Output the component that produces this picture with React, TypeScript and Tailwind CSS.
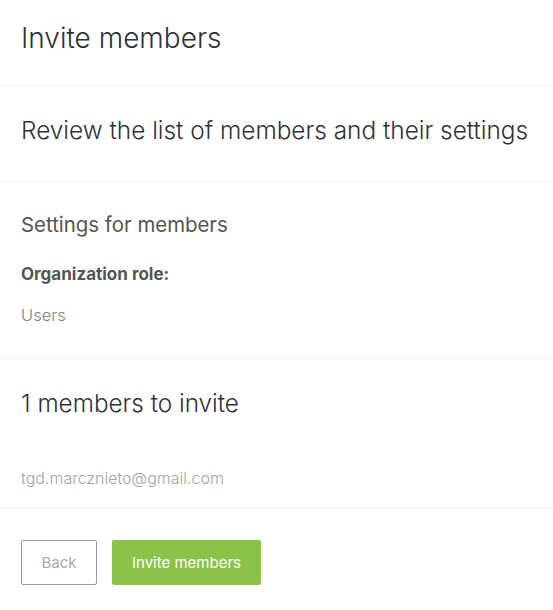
import React from 'react';

const members = ['tgd.marcznieto@gmail.com'];

const App: React.FC = () => {
  return (
    <div className="w-[553px] min-h-[610px] bg-white font-['Inter','Liberation_Sans',sans-serif]">
      {/* header */}
      <div className="px-[21px] pt-[21px] pb-[30px] border-b border-[#f1f1f1]">
        <h1 className="text-[28px] leading-[34px] font-light text-[#2f3337]">Invite members</h1>
      </div>

      <div className="px-[21px] pt-[29px] pb-[36px] border-b border-[#f1f1f1]">
        <h2 className="text-[24.4px] leading-[30px] font-light text-[#2f3337]">
          Review the list of members and their settings
        </h2>
      </div>

      {/* settings */}
      <div className="px-[21px] pt-[30px] pb-[32px] border-b border-[#f1f1f1]">
        <h3 className="text-[20.4px] leading-[26px] font-normal text-[#555]">Settings for members</h3>
        <p className="mt-[26px] text-[17px] leading-[20px] font-bold text-[#555]">Organization role:</p>
        <p className="mt-[20px] text-[16.5px] leading-[22px] font-light text-[#857d79]">Users</p>
      </div>

      {/* members list */}
      <div className="px-[21px] pt-[29px] pb-[19px] border-b-2 border-[#f2f5f5]">
        <h2 className="text-[24.3px] leading-[30px] font-light text-[#2f3337]">{members.length} members to invite</h2>
        <ul className="mt-[50px]">
          {members.map(m => (
            <li key={m} className="text-[16px] leading-[20px] font-light text-[#a3a3a3]">{m}</li>
          ))}
        </ul>
      </div>

      <div className="px-[21px] pt-[31px] flex gap-[15px]">
        <button className="w-[76px] h-[45px] pt-[2px] border border-[#9a9a9a] rounded-[2px] text-[15px] text-[#aaa] bg-white">
          Back
        </button>
        <button className="w-[149px] h-[45px] pt-[2px] rounded-[2px] bg-[#8bc34a] text-[15px] text-white">
          Invite members
        </button>
      </div>
    </div>
  );
};

export default App;
